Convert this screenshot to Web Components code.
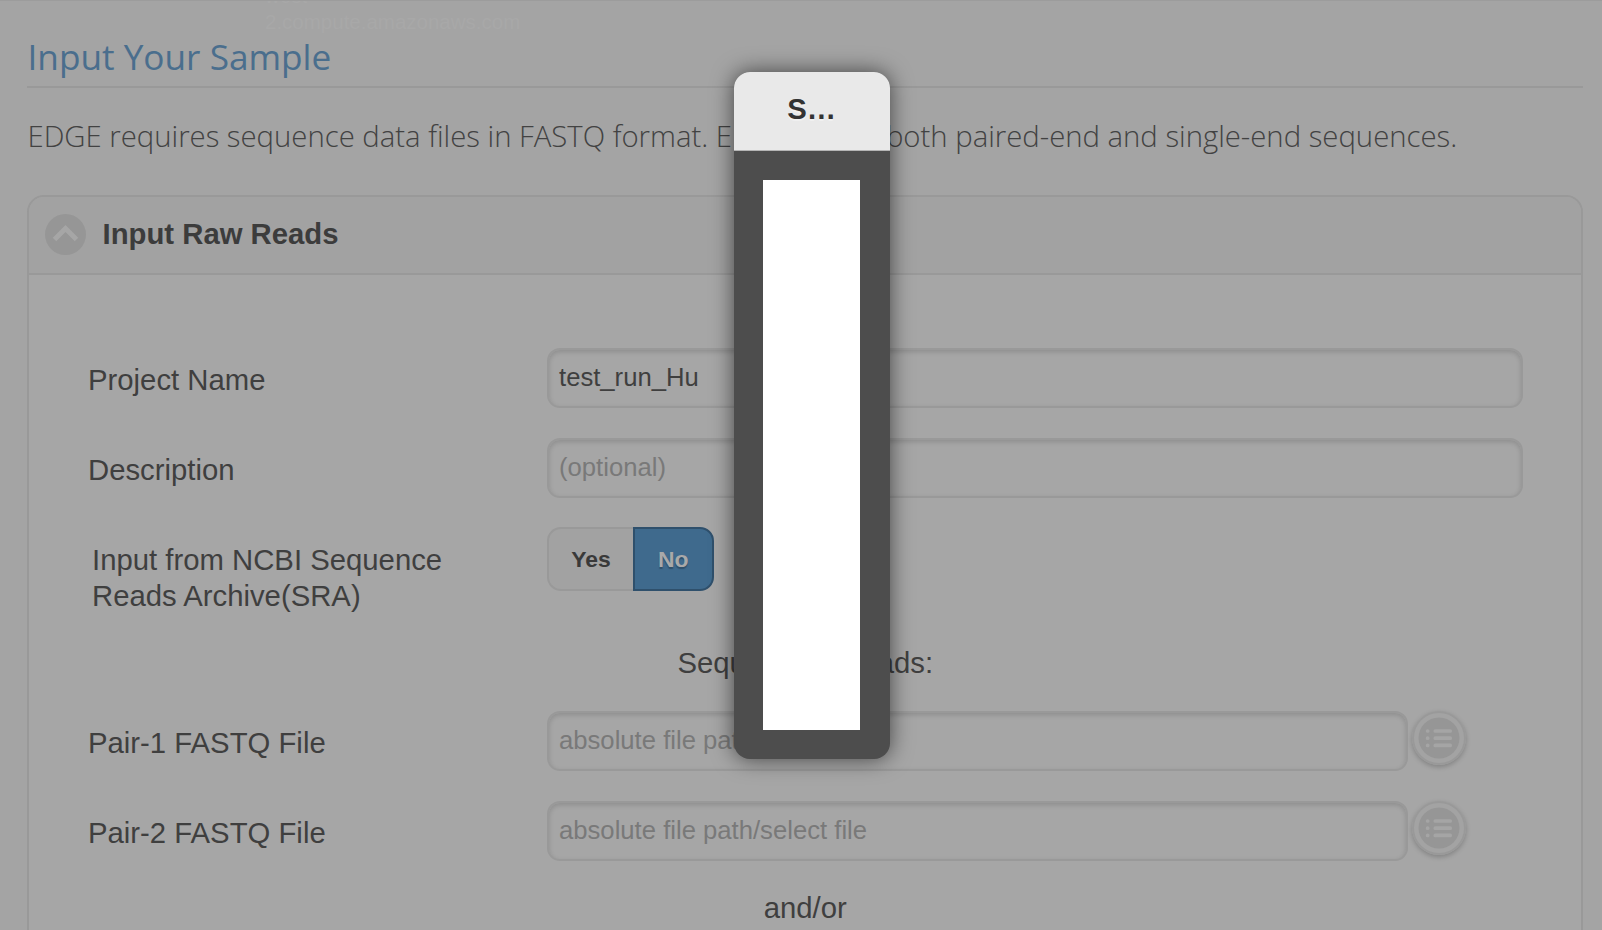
<!DOCTYPE html>
<html lang="en"><head><meta charset="utf-8"><title>EDGE</title>
<style>
html,body{margin:0;height:930px;overflow:hidden}
body{background:#a4a4a4;font-family:"Liberation Sans",Arial,sans-serif;font-size:29.3px;color:#3f3f3f}
</style></head><body>
<edge-page>
  <page-heading>Input Your Sample</page-heading>
  <page-intro>EDGE requires sequence data files in FASTQ format. EDGE allows both paired-end and single-end sequences.</page-intro>
  <fold-panel heading="Input Raw Reads">
    <form-row label="Project Name"><text-field value="test_run_Hu"></text-field></form-row>
    <form-row label="Description"><text-field placeholder="(optional)"></text-field></form-row>
    <form-row tall label="Input from NCBI Sequence Reads Archive(SRA)"><flip-choice></flip-choice></form-row>
    <center-note style="margin-top:9.6px;padding-top:30px;height:84.1px">Sequencing Reads:</center-note>
    <form-row label="Pair-1 FASTQ File"><text-field file placeholder="absolute file path/select file"></text-field><list-button></list-button></form-row>
    <form-row label="Pair-2 FASTQ File"><text-field file placeholder="absolute file path/select file"></text-field><list-button></list-button></form-row>
    <center-note style="margin-top:-1px;padding-top:13px;height:60px">and/or</center-note>
  </fold-panel>
  <status-ghost slot="over"></status-ghost>
  <modal-popup slot="over" heading="S…"></modal-popup>
</edge-page>
<script>
function define(name, html){
  customElements.define(name, class extends HTMLElement{
    constructor(){
      super();
      const get = k => this.getAttribute(k) || '';
      this.attachShadow({mode:'open'}).innerHTML = typeof html === 'function' ? html(get, this) : html;
    }
  });
}
define('edge-page', `<style>
:host{display:block;position:relative;box-sizing:border-box;height:930px;padding:34px 19px 0 27px;border-top:1px solid #9c9c9c;overflow:hidden}
</style><slot></slot><slot name="over"></slot>`);
define('page-heading', `<style>
:host{display:block;font:400 35.2px/42px "Open Sans",sans-serif;color:#4a6e8d;height:50.5px;padding-left:.5px;border-bottom:2px solid #999;box-sizing:content-box}
</style><slot></slot>`);
define('page-intro', `<style>
:host{display:block;font:300 29.33px/40px "Open Sans",sans-serif;letter-spacing:-.02px;color:#424242;margin-top:28.3px;padding-left:.5px;white-space:nowrap;height:79px}
</style><slot></slot>`);
define('fold-panel', g => `<style>
:host{display:block;box-sizing:border-box;height:760px;border:2px solid #999;border-radius:17px 17px 0 0;background:#a6a6a6;overflow:hidden}
header{display:flex;align-items:center;gap:16.5px;height:76px;padding-left:16px;background:#a2a2a2;border-bottom:2px solid #999;box-sizing:content-box;font-weight:bold;color:#3c3c3c}
svg{display:block;width:41px;height:41px}
section{padding:61px 58.5px 0 59px}
h3{font-size:inherit;margin:0;line-height:36px;position:relative;top:-1px}
</style><header><svg viewBox="0 0 41 41"><circle cx="20.5" cy="20.5" r="20.5" fill="#969696"/><path d="M9.5 25.5 20.5 14.5 31.5 25.5" fill="none" stroke="#a6a6a6" stroke-width="5"/></svg><h3>${g('heading')}</h3></header><section><slot></slot></section>`);
define('form-row', g => `<style>
:host{display:flex;align-items:flex-start;height:89.8px;padding-top:12px;box-sizing:border-box}
label{box-sizing:border-box;width:459px;flex:none;line-height:36.67px;padding-top:14.2px}
:host([tall]) label{padding:14.2px 100px 0 4px}
::slotted(text-field){flex:1}
::slotted(text-field[file]){flex:none;width:861px}
::slotted(list-button){margin-left:3.5px}
</style><label>${g('label')}</label><slot></slot>`);
define('text-field', g => `<style>
:host{display:block;box-sizing:border-box;height:60.3px;border:2px solid #999;border-radius:13px;box-shadow:inset 0 2px 5px rgba(0,0,0,.15);padding:0 10px;font-size:25.67px;line-height:55.5px}
.placeholder{color:#797979}
</style><span class="${g('value') ? '' : 'placeholder'}">${g('value') || g('placeholder')}</span>`);
define('flip-choice', `<style>
:host{display:flex;width:166.5px;height:64px;font:bold 22.9px/60px "Liberation Sans",sans-serif;margin-top:0}
div{box-sizing:border-box;text-align:center}
.yes{width:86px;border:2px solid #999;border-right:0;border-radius:14px 0 0 14px;background:#a2a2a2;color:#393939}
.no{width:80.5px;border:2px solid #2f506c;border-radius:0 14px 14px 0;background:#3f6a8d;color:#a9a9a9;text-shadow:0 2px 1px #2f506b}
</style><div class="yes">Yes</div><div class="no">No</div>`);
define('center-note', `<style>:host{display:block;text-align:center;line-height:36.67px;box-sizing:border-box}</style><slot></slot>`);
define('list-button', `<style>
:host{display:block;width:54px;height:54px;border-radius:50%;box-shadow:0 2px 5px rgba(0,0,0,.22)}
svg{display:block}
</style><svg width="54" height="54" viewBox="0 0 54 54"><circle cx="27" cy="27" r="26" fill="#a3a3a3" stroke="#999" stroke-width="2"/><circle cx="27" cy="27" r="20.5" fill="#969696"/><g stroke="#a5a5a5" stroke-width="3.7" stroke-linecap="round"><path d="M23.3 20H38.2M23.3 27.2H38.2M23.3 34.4H38.2M15.6 20h.1M15.6 27.2h.1M15.6 34.4h.1"/></g></svg>`);
define('status-ghost', `<style>
:host{position:absolute;left:265px;top:-18px;font-size:20.5px;line-height:26px;color:#a8a8a8;white-space:nowrap}
div{display:block}
</style><div>west-</div><div>2.compute.amazonaws.com</div>`);
define('modal-popup', g => `<style>
:host{position:absolute;left:734px;top:70.5px;width:155.5px;height:687.5px;box-sizing:border-box;display:flex;flex-direction:column;border-radius:16px;background:#4d4d4d;box-shadow:0 0 22px rgba(0,0,0,.6);padding-bottom:29px}
header{height:79.5px;box-sizing:border-box;background:#e9e9e9;border-radius:16px 16px 0 0;text-align:center;font-weight:bold;line-height:73px;color:#333;text-shadow:0 2px 0 #f0f0f0;border-bottom:1px solid #b5b5b5}
main{flex:1;margin:29px 29.5px 0 29px;background:#fff}
</style><header>${g('heading')}</header><main></main>`);
</script></body></html>
